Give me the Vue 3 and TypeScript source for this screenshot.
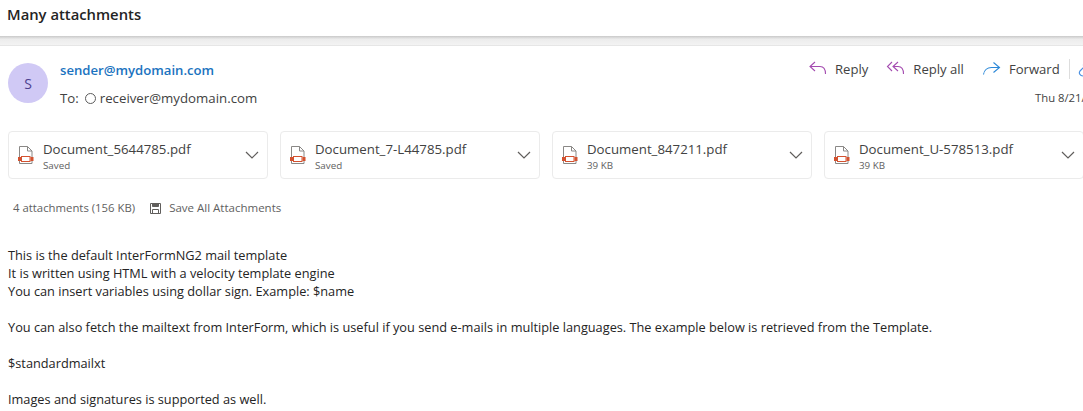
<script setup lang="ts">
interface Attachment { name: string; meta: string }
const attachments: Attachment[] = [
  { name: 'Document_5644785.pdf', meta: 'Saved' },
  { name: 'Document_7-L44785.pdf', meta: 'Saved' },
  { name: 'Document_847211.pdf', meta: '39 KB' },
  { name: 'Document_U-578513.pdf', meta: '39 KB' },
]
</script>

<template>
  <div class="page">
    <header class="subject">Many attachments</header>
    <div class="band"></div>
    <section class="head">
      <div class="avatar">S</div>
      <div class="who">
        <div class="sender">sender@mydomain.com</div>
        <div class="to">
          <span>To:</span>
          <i class="ring"></i>
          <span class="rcv">receiver@mydomain.com</span>
        </div>
      </div>
      <div class="right">
        <div class="actions">
          <span class="act">
            <svg width="20" height="20" viewBox="0 0 20 20" fill="none" stroke="#a44cb0" stroke-width="1.1">
              <path d="M7 3 2 7.500l5 4.500M2 7.500h10c3 0 5.500 2.500 5.500 7.500" />
            </svg>
            Reply
          </span>
          <span class="act">
            <svg width="20" height="20" viewBox="0 0 20 20" fill="none" stroke="#a44cb0" stroke-width="1.1">
              <path d="M6 3 1.500 7.500 6 12M12 3 7 7.500l5 4.500M7 7.500h5c3.500 0 5.500 2.500 5.500 7.500" />
            </svg>
            Reply all
          </span>
          <span class="act">
            <svg width="20" height="20" viewBox="0 0 20 20" fill="none" stroke="#2b88d8" stroke-width="1.1">
              <path d="M11.500 3.500 17.500 8.500 11.500 13.500M17.500 8.500H9.500c-4 0-7.500 2.500-8 7" />
            </svg>
            Forward
          </span>
          <span class="sep"></span>
          <svg class="extra" width="18" height="20" viewBox="0 0 18 20" fill="none" stroke="#4a90e2" stroke-width="1.200">
            <circle cx="8.500" cy="6" r="3" />
            <path d="M6 8 2 12c-1.500 2 0 5 3 5 2 0 3-1 4-2l3-3" />
          </svg>
        </div>
        <div class="date">Thu 8/21/2025 9:14 AM</div>
      </div>
    </section>

    <section class="cards">
      <div v-for="a in attachments" :key="a.name" class="card">
        <svg class="pdf" width="16" height="18" viewBox="0 0 16 18" fill="none">
          <path d="M1.500.5h8l4.500 4.500v12.500H1.500z" stroke="#8a8886" />
          <path d="M9.500.5v4.500H14" stroke="#8a8886" />
          <rect x="3.500" y="10.500" width="8.500" height="5" stroke="#d35230" fill="#fff" />
          <rect x="0" y="11" width="3" height="4" fill="#d35230" />
          <rect x="12.500" y="11" width="3" height="4" fill="#d35230" />
        </svg>
        <div class="info">
          <div class="name">{{ a.name }}</div>
          <div class="meta">{{ a.meta }}</div>
        </div>
        <svg class="chev" width="16" height="16" viewBox="0 0 16 16" fill="none" stroke="#605e5c" stroke-width="1.200">
          <path d="M2 5l6 6 6-6" />
        </svg>
      </div>
    </section>

    <section class="summary">
      <span>4 attachments (156 KB)</span>
      <span class="save">
        <svg width="11" height="11" viewBox="0 0 11 11" fill="none" stroke="#605e5c">
          <path d="M.5.5h10v10H.5z" />
          <path d="M2.500.5v3h6V.5" fill="#605e5c" />
          <path d="M2.500 10.500V6.500h6v4" />
        </svg>
        <span class="save-label">Save All Attachments</span>
      </span>
    </section>

    <section class="body">
      <p>This is the default InterFormNG2 mail template<br />It is written using HTML with a velocity template engine<br />You can insert variables using dollar sign. Example: $name</p>
      <p>You can also fetch the mailtext from InterForm, which is useful if you send e-mails in multiple languages. The example below is retrieved from the Template.</p>
      <p>$standardmailxt</p>
      <p>Images and signatures is supported as well.</p>
    </section>
  </div>
</template>

<style>
html, body { margin: 0; background: #fff; overflow: hidden; }
</style>

<style scoped>
.page {
  width: 1083px;
  height: 411px;
  overflow: hidden;
  font-family: "Open Sans", "Noto Sans", sans-serif;
  color: #242424;
  background: #fff;
}
.subject {
  height: 36px;
  box-sizing: border-box;
  padding: 3px 0 0 7px;
  font-size: 14.800px;
  font-weight: 600;
  line-height: 22px;
}
.band {
  height: 9px;
  background: linear-gradient(#c9c9c9, #ececec 35%, #f3f3f3);
  border-bottom: 1px solid #e6e6e6;
}
.head {
  display: flex;
  height: 85px;
  box-sizing: border-box;
  padding: 13px 0 0 8px;
}
.avatar {
  width: 40px;
  height: 40px;
  margin-top: 4px;
  border-radius: 50%;
  background: #d0c9f5;
  color: #4b3f8f;
  font-size: 14px;
  display: flex;
  align-items: center;
  justify-content: center;
}
.who { margin-left: 12px; padding-top: 2px; }
.sender {
  color: #1a73c0;
  font-size: 13.150px;
  font-weight: 600;
  line-height: 18px;
}
.to {
  display: flex;
  align-items: center;
  margin-top: 10px;
  font-size: 13.250px;
  line-height: 18px;
  color: #424242;
}
.ring {
  width: 9px;
  height: 9px;
  border: 1.500px solid #5c5c5c;
  border-radius: 50%;
  margin: 0 4px 0 6px;
}
.right {
  margin-left: auto;
  width: 275px;
  flex: none;
  overflow: hidden;
  white-space: nowrap;
}
.actions {
  display: flex;
  align-items: center;
  height: 20px;
  font-size: 13.100px;
  color: #424242;
}
.act { display: flex; align-items: center; gap: 7px; margin-right: 18px; }
.sep { width: 1px; height: 20px; background: #ddd; margin: 0 8px 0 -9px; flex: none; }
.extra { flex: none; }
.date { margin-top: 11px; padding-left: 227px; font-size: 11.300px; line-height: 16px; color: #424242; }
.cards { display: flex; gap: 12px; padding-left: 8px; width: 1200px; }
.card {
  width: 260px;
  height: 48px;
  flex: none;
  box-sizing: border-box;
  border: 1px solid #ebebeb;
  border-radius: 4px;
  display: flex;
  align-items: center;
  padding: 0 7px 0 9px;
}
.pdf { flex: none; }
.info { margin-left: 9px; flex: 1; padding-top: 2px; }
.name { font-size: 13.250px; line-height: 18px; color: #424242; }
.meta { font-size: 9.800px; line-height: 13px; color: #616161; margin-top: 1px; }
.summary {
  display: flex;
  gap: 15px;
  margin-top: 21px;
  padding-left: 13px;
  font-size: 11.350px;
  line-height: 16px;
  color: #616161;
}
.save { display: flex; align-items: center; gap: 8px; }
.save-label { font-size: 11.500px; }
.body { margin-top: 30px; padding-left: 8px; font-size: 12.750px; line-height: 18px; color: #242424; }
.body p { margin: 0 0 18px; }
</style>
